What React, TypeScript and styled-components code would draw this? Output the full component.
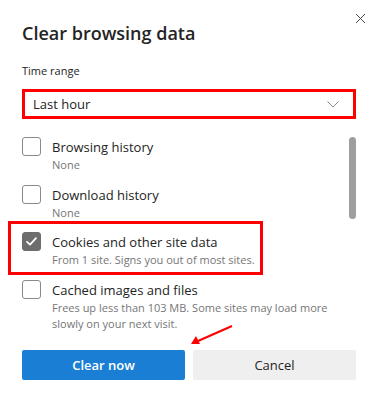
import styled, { createGlobalStyle } from 'styled-components';

const GlobalStyle = createGlobalStyle`
  html, body {
    margin: 0;
    padding: 0;
    background: #ffffff;
  }
  body {
    font-family: 'Open Sans', 'Noto Sans', sans-serif;
    color: #1f1f1f;
  }
`;

const Dialog = styled.div`
  position: relative;
  width: 369px;
  height: 399px;
  box-sizing: border-box;
  padding: 19px 13px 0 22px;
  background: #ffffff;
  overflow: hidden;
`;

const CloseButton = styled.button`
  position: absolute;
  top: 11px;
  right: 2px;
  width: 14px;
  height: 14px;
  padding: 0;
  border: none;
  background: none;
  display: flex;
  align-items: center;
  justify-content: center;
`;

const Title = styled.h1`
  margin: 0;
  font-size: 18px;
  line-height: 28px;
  font-weight: 600;
  color: #242424;
`;

const FieldLabel = styled.div`
  margin-top: 16px;
  font-size: 11px;
  line-height: 16px;
  color: #242424;
`;

const Highlight = styled.div<{ $width?: number }>`
  border: 3px solid #ff0000;
  box-sizing: border-box;
  ${(p) => (p.$width ? `width: ${p.$width}px;` : '')}
`;

const SelectHighlight = styled(Highlight)`
  margin-top: 10px;
`;

const SelectBox = styled.div`
  height: 24px;
  display: flex;
  align-items: center;
  justify-content: space-between;
  padding: 0 14px 0 8px;
  font-size: 13px;
  color: #242424;
`;

const ScrollArea = styled.div`
  display: flex;
  margin-top: 18px;
`;

const List = styled.div`
  flex: 1;
  display: flex;
  flex-direction: column;
  gap: 12px;
`;

const ScrollTrack = styled.div`
  width: 7px;
  margin-left: 8px;
  flex-shrink: 0;
`;

const ScrollThumb = styled.div`
  width: 7px;
  height: 82px;
  border-radius: 4px;
  background: #9e9e9e;
`;

const Row = styled.label`
  display: flex;
  gap: 11px;
  align-items: flex-start;
`;

const RowHighlight = styled(Highlight)`
  margin: -12px 0 -7px -14px;
  padding: 8px 0 4px 11px;
`;

const Box = styled.span<{ $checked?: boolean }>`
  width: 19px;
  height: 19px;
  flex-shrink: 0;
  box-sizing: border-box;
  border-radius: 3px;
  border: 1px solid ${(p) => (p.$checked ? '#6d6d6d' : '#8a8a8a')};
  background: ${(p) => (p.$checked ? '#6d6d6d' : '#ffffff')};
  display: flex;
  align-items: center;
  justify-content: center;
`;

const RowText = styled.div`
  display: flex;
  flex-direction: column;
`;

const RowTitle = styled.span`
  font-size: 13px;
  line-height: 20px;
  color: #242424;
`;

const RowDesc = styled.span`
  font-size: 11px;
  line-height: 16px;
  color: #767676;
`;

const Actions = styled.div`
  display: flex;
  gap: 8px;
  margin-top: 18px;
  width: 334px;
`;

const Button = styled.button<{ $primary?: boolean }>`
  flex: 1;
  height: 30px;
  border: none;
  border-radius: 2px;
  font-family: inherit;
  font-size: 13px;
  font-weight: ${(p) => (p.$primary ? 600 : 400)};
  color: ${(p) => (p.$primary ? '#ffffff' : '#242424')};
  background: ${(p) => (p.$primary ? '#1a7fd4' : '#efefef')};
`;

const Annotation = styled.svg`
  position: absolute;
  left: 0;
  top: 0;
  pointer-events: none;
`;

const Check = () => (
  <svg width="13" height="13" viewBox="0 0 13 13">
    <path
      d="M2 6.8 L5 9.6 L11 3.2"
      fill="none"
      stroke="#ffffff"
      strokeWidth="1.8"
      strokeLinecap="round"
      strokeLinejoin="round"
    />
  </svg>
);

const Chevron = () => (
  <svg width="12" height="7" viewBox="0 0 12 7">
    <path d="M0.5 0.5 L6 6 L11.5 0.5" fill="none" stroke="#8a8a8a" strokeWidth="1" />
  </svg>
);

const CloseIcon = () => (
  <svg width="11" height="11" viewBox="0 0 11 11">
    <path d="M1 1 L10 10 M10 1 L1 10" fill="none" stroke="#4a4a4a" strokeWidth="1" />
  </svg>
);

interface ItemProps {
  title: string;
  desc: string;
  checked?: boolean;
}

const Item = ({ title, desc, checked }: ItemProps) => (
  <Row>
    <Box $checked={checked}>{checked && <Check />}</Box>
    <RowText>
      <RowTitle>{title}</RowTitle>
      <RowDesc>{desc}</RowDesc>
    </RowText>
  </Row>
);

const App = () => (
  <>
    <GlobalStyle />
    <Dialog>
      <CloseButton aria-label="Close">
        <CloseIcon />
      </CloseButton>
      <Title>Clear browsing data</Title>
      <FieldLabel>Time range</FieldLabel>
      <SelectHighlight>
        <SelectBox>
          <span>Last hour</span>
          <Chevron />
        </SelectBox>
      </SelectHighlight>
      <ScrollArea>
        <List>
          <Item title="Browsing history" desc="None" />
          <Item title="Download history" desc="None" />
          <RowHighlight $width={255}>
            <Item title="Cookies and other site data" desc="From 1 site. Signs you out of most sites." checked />
          </RowHighlight>
          <Item
            title="Cached images and files"
            desc="Frees up less than 103 MB. Some sites may load more slowly on your next visit."
          />
        </List>
        <ScrollTrack>
          <ScrollThumb />
        </ScrollTrack>
      </ScrollArea>
      <Actions>
        <Button $primary>Clear now</Button>
        <Button>Cancel</Button>
      </Actions>
      <Annotation width="369" height="399" viewBox="0 0 369 399">
        <line x1="232" y1="326" x2="198" y2="341" stroke="#ff0000" strokeWidth="2" />
        <path d="M191 344 L196 336 L200 344 Z" fill="#ff0000" />
      </Annotation>
    </Dialog>
  </>
);

export default App;
